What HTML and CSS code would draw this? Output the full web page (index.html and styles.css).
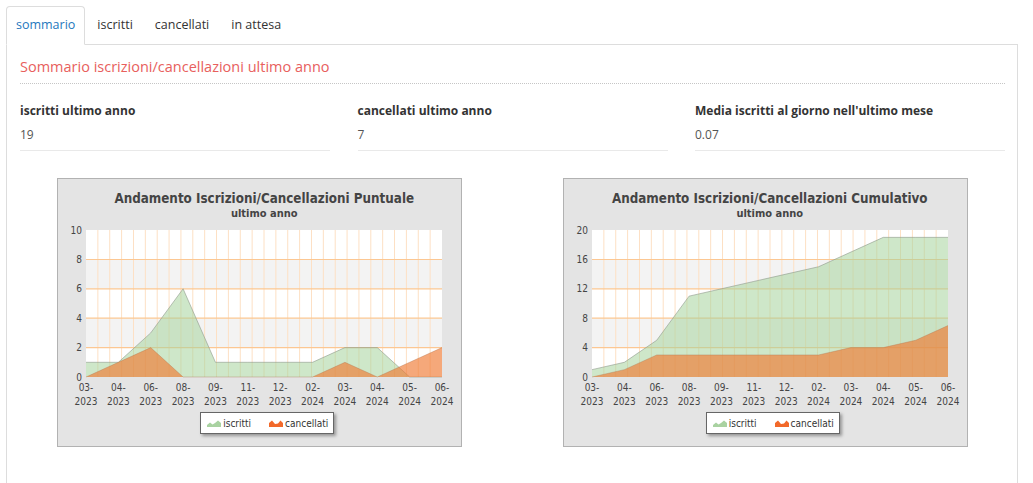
FILE: index.html
```html
<!DOCTYPE html>
<html lang="it">
<head>
<meta charset="utf-8">
<title>Sommario iscrizioni</title>
<link rel="stylesheet" href="styles.css">
</head>
<body>
<div class="page">
  <ul class="tabs">
    <li class="tab active">sommario</li>
    <li class="tab">iscritti</li>
    <li class="tab">cancellati</li>
    <li class="tab">in attesa</li>
  </ul>
  <div class="panel">
    <h2 class="section-title">Sommario iscrizioni/cancellazioni ultimo anno</h2>
    <div class="stats">
      <div class="stat">
        <div class="stat-label">iscritti ultimo anno</div>
        <div class="stat-value">19</div>
      </div>
      <div class="stat">
        <div class="stat-label">cancellati ultimo anno</div>
        <div class="stat-value">7</div>
      </div>
      <div class="stat">
        <div class="stat-label">Media iscritti al giorno nell'ultimo mese</div>
        <div class="stat-value">0.07</div>
      </div>
    </div>
    <div class="charts">
      <div class="chart-col">
        <div class="chart">
          <div class="chart-title">Andamento Iscrizioni/Cancellazioni Puntuale</div>
          <div class="chart-subtitle">ultimo anno</div>
          <svg class="plot" width="403" height="186" viewBox="0 0 403 186">
            <rect x="28" y="9" width="356" height="147" fill="#ffffff"/>
            <rect x="28" y="38.4" width="356" height="29.4" fill="#f3f3f3"/>
            <rect x="28" y="97.2" width="356" height="29.4" fill="#f3f3f3"/>
            <path class="vgrid" d="M39.87 9V156M51.73 9V156M63.6 9V156M75.47 9V156M87.33 9V156M99.2 9V156M111.07 9V156M122.93 9V156M134.8 9V156M146.67 9V156M158.53 9V156M170.4 9V156M182.27 9V156M194.13 9V156M206 9V156M217.87 9V156M229.73 9V156M241.6 9V156M253.47 9V156M265.33 9V156M277.2 9V156M289.07 9V156M300.93 9V156M312.8 9V156M324.67 9V156M336.53 9V156M348.4 9V156M360.27 9V156M372.13 9V156"/>
            <path class="hgrid" d="M28 38.5H384M28 67.8H384M28 97.2H384M28 126.6H384"/>
            <path class="area-green" d="M28 156L28 141.3L60.36 141.3L92.73 111.9L125.09 67.8L157.45 141.3L189.82 141.3L222.18 141.3L254.55 141.3L286.91 126.6L319.27 126.6L351.64 156L384 156Z"/>
            <path class="area-line" d="M28 141.3L60.36 141.3L92.73 111.9L125.09 67.8L157.45 141.3L189.82 141.3L222.18 141.3L254.55 141.3L286.91 126.6L319.27 126.6L351.64 156L384 156"/>
            <path class="area-orange" d="M28 156L60.36 141.3L92.73 126.6L125.09 156L157.45 156L189.82 156L222.18 156L254.55 156L286.91 141.3L319.27 156L351.64 141.3L384 126.6L384 156Z"/>
            <path class="area-line-o" d="M28 156L60.36 141.3L92.73 126.6L125.09 156L157.45 156L189.82 156L222.18 156L254.55 156L286.91 141.3L319.27 156L351.64 141.3L384 126.6"/>
            <g class="ylabels">
              <text x="24" y="12.5">10</text>
              <text x="24" y="41.9">8</text>
              <text x="24" y="71.3">6</text>
              <text x="24" y="100.7">4</text>
              <text x="24" y="130.1">2</text>
              <text x="24" y="159.5">0</text>
            </g>
            <g class="xlabels">
              <text><tspan x="28" y="169.5">03-</tspan><tspan x="28" y="183.5">2023</tspan></text>
              <text><tspan x="60.36" y="169.5">04-</tspan><tspan x="60.36" y="183.5">2023</tspan></text>
              <text><tspan x="92.73" y="169.5">06-</tspan><tspan x="92.73" y="183.5">2023</tspan></text>
              <text><tspan x="125.09" y="169.5">08-</tspan><tspan x="125.09" y="183.5">2023</tspan></text>
              <text><tspan x="157.45" y="169.5">09-</tspan><tspan x="157.45" y="183.5">2023</tspan></text>
              <text><tspan x="189.82" y="169.5">11-</tspan><tspan x="189.82" y="183.5">2023</tspan></text>
              <text><tspan x="222.18" y="169.5">12-</tspan><tspan x="222.18" y="183.5">2023</tspan></text>
              <text><tspan x="254.55" y="169.5">02-</tspan><tspan x="254.55" y="183.5">2024</tspan></text>
              <text><tspan x="286.91" y="169.5">03-</tspan><tspan x="286.91" y="183.5">2024</tspan></text>
              <text><tspan x="319.27" y="169.5">04-</tspan><tspan x="319.27" y="183.5">2024</tspan></text>
              <text><tspan x="351.64" y="169.5">05-</tspan><tspan x="351.64" y="183.5">2024</tspan></text>
              <text><tspan x="384" y="169.5">06-</tspan><tspan x="384" y="183.5">2024</tspan></text>
            </g>
          </svg>
          <div class="legend">
            <div class="legend-item">
              <svg class="legend-icon" width="14" height="8" viewBox="0 0 14 8"><path d="M0 8V6L3 3.5L5.5 5.5L8 4L11 1.5L14 4V8Z" fill="#a9d2a1"/></svg>
              <span>iscritti</span>
            </div>
            <div class="legend-item">
              <svg class="legend-icon" width="14" height="8" viewBox="0 0 14 8"><path d="M0 8V4L3 1.5L6 5L9 4.5L11.5 1.5L14 4V8Z" fill="#f2692a"/></svg>
              <span>cancellati</span>
            </div>
          </div>
        </div>
      </div>
      <div class="chart-col">
        <div class="chart">
          <div class="chart-title">Andamento Iscrizioni/Cancellazioni Cumulativo</div>
          <div class="chart-subtitle">ultimo anno</div>
          <svg class="plot" width="403" height="186" viewBox="0 0 403 186">
            <rect x="28" y="9" width="356" height="147" fill="#ffffff"/>
            <rect x="28" y="38.4" width="356" height="29.4" fill="#f3f3f3"/>
            <rect x="28" y="97.2" width="356" height="29.4" fill="#f3f3f3"/>
            <path class="vgrid" d="M39.87 9V156M51.73 9V156M63.6 9V156M75.47 9V156M87.33 9V156M99.2 9V156M111.07 9V156M122.93 9V156M134.8 9V156M146.67 9V156M158.53 9V156M170.4 9V156M182.27 9V156M194.13 9V156M206 9V156M217.87 9V156M229.73 9V156M241.6 9V156M253.47 9V156M265.33 9V156M277.2 9V156M289.07 9V156M300.93 9V156M312.8 9V156M324.67 9V156M336.53 9V156M348.4 9V156M360.27 9V156M372.13 9V156"/>
            <path class="hgrid" d="M28 38.5H384M28 67.8H384M28 97.2H384M28 126.6H384"/>
            <path class="area-green" d="M28 156L28 148.65L60.36 141.3L92.73 119.25L125.09 75.15L157.45 67.8L189.82 60.45L222.18 53.1L254.55 45.75L286.91 31.05L319.27 16.35L351.64 16.35L384 16.35L384 156Z"/>
            <path class="area-line" d="M28 148.65L60.36 141.3L92.73 119.25L125.09 75.15L157.45 67.8L189.82 60.45L222.18 53.1L254.55 45.75L286.91 31.05L319.27 16.35L351.64 16.35L384 16.35"/>
            <path class="area-orange" d="M28 156L60.36 148.65L92.73 133.95L125.09 133.95L157.45 133.95L189.82 133.95L222.18 133.95L254.55 133.95L286.91 126.6L319.27 126.6L351.64 119.25L384 104.55L384 156Z"/>
            <path class="area-line-o" d="M28 156L60.36 148.65L92.73 133.95L125.09 133.95L157.45 133.95L189.82 133.95L222.18 133.95L254.55 133.95L286.91 126.6L319.27 126.6L351.64 119.25L384 104.55"/>
            <g class="ylabels">
              <text x="24" y="12.5">20</text>
              <text x="24" y="41.9">16</text>
              <text x="24" y="71.3">12</text>
              <text x="24" y="100.7">8</text>
              <text x="24" y="130.1">4</text>
              <text x="24" y="159.5">0</text>
            </g>
            <g class="xlabels">
              <text><tspan x="28" y="169.5">03-</tspan><tspan x="28" y="183.5">2023</tspan></text>
              <text><tspan x="60.36" y="169.5">04-</tspan><tspan x="60.36" y="183.5">2023</tspan></text>
              <text><tspan x="92.73" y="169.5">06-</tspan><tspan x="92.73" y="183.5">2023</tspan></text>
              <text><tspan x="125.09" y="169.5">08-</tspan><tspan x="125.09" y="183.5">2023</tspan></text>
              <text><tspan x="157.45" y="169.5">09-</tspan><tspan x="157.45" y="183.5">2023</tspan></text>
              <text><tspan x="189.82" y="169.5">11-</tspan><tspan x="189.82" y="183.5">2023</tspan></text>
              <text><tspan x="222.18" y="169.5">12-</tspan><tspan x="222.18" y="183.5">2023</tspan></text>
              <text><tspan x="254.55" y="169.5">02-</tspan><tspan x="254.55" y="183.5">2024</tspan></text>
              <text><tspan x="286.91" y="169.5">03-</tspan><tspan x="286.91" y="183.5">2024</tspan></text>
              <text><tspan x="319.27" y="169.5">04-</tspan><tspan x="319.27" y="183.5">2024</tspan></text>
              <text><tspan x="351.64" y="169.5">05-</tspan><tspan x="351.64" y="183.5">2024</tspan></text>
              <text><tspan x="384" y="169.5">06-</tspan><tspan x="384" y="183.5">2024</tspan></text>
            </g>
          </svg>
          <div class="legend">
            <div class="legend-item">
              <svg class="legend-icon" width="14" height="8" viewBox="0 0 14 8"><path d="M0 8V6L3 3.5L5.5 5.5L8 4L11 1.5L14 4V8Z" fill="#a9d2a1"/></svg>
              <span>iscritti</span>
            </div>
            <div class="legend-item">
              <svg class="legend-icon" width="14" height="8" viewBox="0 0 14 8"><path d="M0 8V4L3 1.5L6 5L9 4.5L11.5 1.5L14 4V8Z" fill="#f2692a"/></svg>
              <span>cancellati</span>
            </div>
          </div>
        </div>
      </div>
    </div>
  </div>
</div>
</body>
</html>
```

FILE: styles.css
```css
html, body {
  margin: 0;
  padding: 0;
  overflow: hidden;
  background: #ffffff;
}

body {
  font-family: "Open Sans", "Liberation Sans", sans-serif;
  color: #333333;
}

.page {
  padding: 6px 0 0 6px;
  width: 1012px;
}

.tabs {
  display: flex;
  list-style: none;
  margin: 0;
  padding: 0;
  border-bottom: 1px solid #dddddd;
}

.tab {
  padding: 9px 9px 11px;
  margin-right: 2px;
  margin-bottom: -1px;
  font-size: 12.5px;
  line-height: 17px;
  color: #333333;
  border: 1px solid transparent;
  border-radius: 4px 4px 0 0;
}

.tab.active {
  color: #2577bd;
  background: #ffffff;
  border-color: #dddddd #dddddd transparent;
}

.panel {
  border: 1px solid #dddddd;
  border-top: none;
  padding: 12px 12px 60px 13px;
}

.section-title {
  margin: 0;
  font-size: 14.5px;
  font-weight: normal;
  line-height: 20px;
  color: #e8605d;
  padding-bottom: 6px;
  border-bottom: 1px dotted #c6c6c6;
}

.stats {
  display: grid;
  grid-template-columns: repeat(3, 1fr);
  column-gap: 27.5px;
  margin-top: 18px;
}

.stat {
  border-bottom: 1px solid #e9e9e9;
  padding-bottom: 6px;
}

.stat-label {
  font-size: 12px;
  font-weight: bold;
  line-height: 18px;
  color: #333333;
}

.stat-value {
  margin-top: 6px;
  font-size: 12px;
  line-height: 18px;
  color: #555555;
}

.charts {
  display: grid;
  grid-template-columns: 1fr 1fr;
  margin: 27px -13px 0 -13px;
}

.chart-col {
  display: flex;
  justify-content: center;
}

.chart {
  box-sizing: border-box;
  width: 405px;
  height: 269px;
  border: 1px solid #b2b2b2;
  background: #e4e4e4;
  padding-top: 11px;
  display: flex;
  flex-direction: column;
  align-items: center;
  font-family: "DejaVu Sans Condensed", "DejaVu Sans", sans-serif;
  font-stretch: condensed;
  color: #444444;
}

.chart-title {
  font-size: 13.3px;
  font-weight: bold;
  line-height: 17px;
  color: #444444;
  padding-left: 9px;
}

.chart-subtitle {
  font-size: 11px;
  font-weight: bold;
  line-height: 14px;
  color: #444444;
  padding-left: 9px;
}

.plot {
  display: block;
  align-self: stretch;
}

.vgrid {
  stroke: #fde0c4;
  stroke-width: 1;
  fill: none;
}

.hgrid {
  stroke: #fcc792;
  stroke-width: 1.2;
  fill: none;
}

.area-green {
  fill: #a6d49d;
  fill-opacity: 0.55;
}

.area-orange {
  fill: #f07a32;
  fill-opacity: 0.65;
}

.area-line {
  fill: none;
  stroke: #8f9a8c;
  stroke-opacity: 0.6;
  stroke-width: 1;
}

.area-line-o {
  fill: none;
  stroke: #b0714a;
  stroke-opacity: 0.35;
  stroke-width: 1;
}

.ylabels text {
  font-size: 10px;
  fill: #444444;
  text-anchor: end;
}

.xlabels text {
  font-size: 10px;
  fill: #444444;
  text-anchor: middle;
}

.legend {
  margin-top: 5px;
  margin-left: 15px;
  box-sizing: border-box;
  height: 22px;
  display: flex;
  align-items: center;
  padding: 0 5px 0 6px;
  background: #ffffff;
  border: 1px solid #666666;
  box-shadow: 2px 2px 3px rgba(0, 0, 0, 0.35);
  font-size: 10px;
  color: #333333;
}

.legend-item {
  display: flex;
  align-items: center;
  gap: 2px;
}

.legend-item + .legend-item {
  margin-left: 18px;
}

.legend-icon {
  display: block;
}
```
